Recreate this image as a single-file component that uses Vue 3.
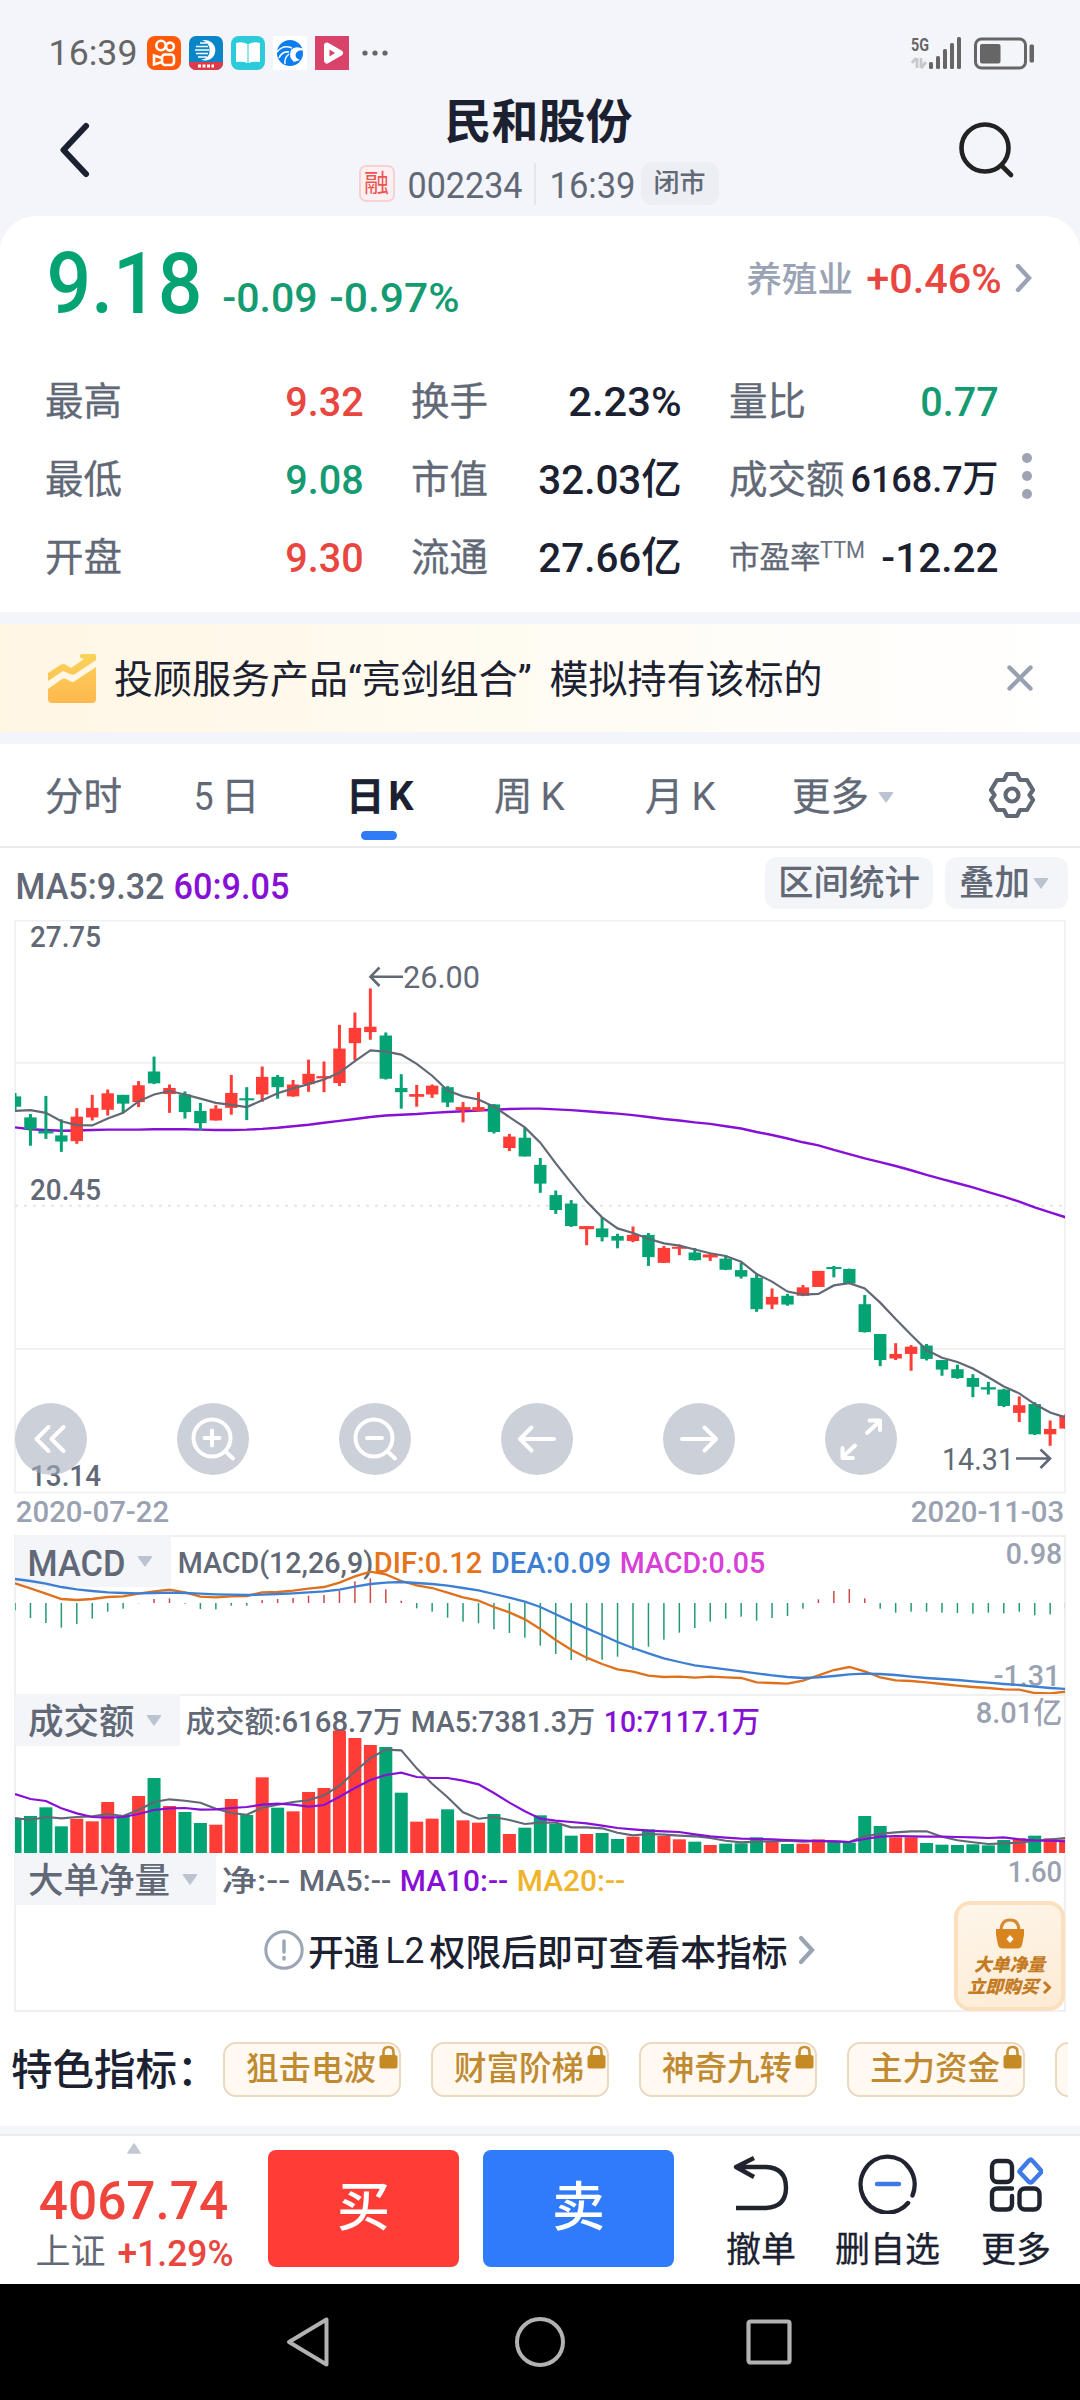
<script setup>
import { h } from 'vue'

// Condensed numeric label: the box is exactly the width and cap height of the text.
const Num = (p) => {
  const s = Number(p.s)
  const w = Number(p.w)
  const cap = s * 0.711
  return h('svg', { class: 'num', width: w, height: cap, style: { overflow: 'visible', display: 'block', flex: 'none' } }, [
    h('text', {
      x: -s * 0.04, y: cap, textLength: w + s * 0.08, lengthAdjust: 'spacingAndGlyphs',
      fill: p.c || '#1b2130', 'font-size': s, 'font-weight': p.b || 500,
      'font-family': 'Roboto, "Noto Sans CJK SC", sans-serif'
    }, p.t)
  ])
}
Num.props = ['t', 'w', 's', 'c', 'b']

const RED = '#ff3d36'
const GREEN = '#04a373'
const STEP = 15.45
const cx = (i) => +(i * STEP + 15).toFixed(2)

const py = (v) => +(v / 2.613 - 10).toFixed(2)
const my = (v) => +(v / 3 - 35).toFixed(2)
const vy = (v) => +(v / 3 - 194).toFixed(2)
const line = (arr, f) => arr.map((v, i) => cx(i) + ',' + f(v)).join(' ')

// high, body top, body bottom, low
const raw = [
  [478,487,514,528],[533,542,573,616],[486,577,584,598],[547,589,605,632],[518,540,604,611],[483,517,542,550],
  [469,479,522,537],[483,483,506,531],[447,458,502,515],[383,422,453,455],[456,465,481,530],[474,482,528,545],
  [504,525,557,575],[510,519,550,550],[431,478,517,535],[463,492,497,549],[409,436,482,501],[431,436,463,493],
  [444,456,487,488],[391,428,455,475],[396,434,440,476],[300,362,452,460],[268,308,348,392],[205,305,319,339],
  [320,328,441,443],[429,465,476,519],[457,481,488,514],[456,459,482,491],[460,463,503,515],[502,515,523,555],
  [476,515,525,526],[507,508,580,584],[585,592,622,630],[569,595,644,644],[648,666,715,739],[733,745,784,794],
  [758,767,826,828],[826,826,834,876],[803,832,855,866],[846,852,864,884],[827,849,865,868],[844,849,907,930],
  [878,883,922,922],[874,880,885,902],[883,895,915,916],[897,900,908,917],[902,911,940,941],[922,941,958,963],
  [951,961,1043,1050],[989,1011,1031,1043],[1003,1008,1031,1034],[980,986,1008,1009],[943,943,985,985],
  [930,933,937,960],[937,938,976,976],[1006,1030,1103,1104],[1108,1108,1176,1192],[1132,1160,1172,1176],
  [1137,1141,1160,1204],[1134,1138,1173,1177],[1176,1176,1201,1217],[1188,1200,1223,1225],[1213,1223,1246,1273],
  [1233,1247,1253,1266],[1251,1253,1296,1299],[1271,1294,1314,1338],[1286,1291,1370,1372],[1334,1356,1370,1400],
  [1318,1321,1355,1355]
]
const reds = new Set([4,5,6,8,10,13,14,16,18,19,20,21,22,23,26,27,29,30,32,37,40,42,43,45,49,51,52,57,58,65,67,68])
const color = (i) => (reds.has(i) ? RED : GREEN)

const ma5 = [525,523,530,552,562,563,545,530,500,482,473,482,493,504,509,515,497,479,466,455,443,425,395,367,370,378,402,433,472,487,495,514,541,568,608,662,713,762,803,832,844,859,871,877,887,897,904,919,951,971,997,1005,1003,981,975,989,1026,1069,1110,1150,1170,1181,1198,1221,1245,1263,1291,1313,1326]
const ma60 = [568,573,575,577,576,575,574,574,574,573,573,573,574,575,575,574,572,569,565,561,556,551,546,541,537,535,533,530,528,526,524,522,520,519,519,521,523,526,529,532,536,541,546,550,555,559,565,571,580,588,597,607,615,627,638,649,659,669,680,692,703,714,725,737,749,762,777,790,803]

const macd = [331,354,369,383,372,356,335,326,310,297,295,311,327,328,317,317,300,297,294,287,285,272,244,235,268,302,325,335,353,365,370,388,399,413,437,462,480,482,479,470,450,440,419,398,384,365,356,350,362,354,348,326,298,273,267,295,326,338,335,335,338,339,341,338,340,335,346,343,325]
const dif = [250,265,281,297,300,297,291,289,281,274,269,277,290,292,289,288,277,276,272,266,261,248,229,215,223,243,256,264,278,292,302,321,337,358,387,420,449,473,492,508,515,527,531,530,533,530,532,534,547,549,551,542,526,510,501,514,532,541,543,547,552,557,561,564,568,569,579,580,575]
const dea = [237,243,251,261,268,273,277,279,280,279,278,279,281,283,284,285,284,282,280,277,274,269,260,252,248,246,249,252,257,264,271,282,293,305,321,343,364,385,405,426,444,460,475,486,496,502,508,514,520,526,531,534,532,528,523,521,522,525,530,534,537,540,544,548,552,555,560,564,567]

const vol = [955,948,922,979,956,964,906,945,888,834,918,936,969,974,897,945,832,923,934,876,864,692,714,735,741,878,965,956,928,961,968,942,1002,983,946,972,1007,1002,999,1017,1010,988,1008,1018,1025,1035,1031,1030,1012,1025,1032,1031,1018,1024,1028,948,978,1012,1012,1029,1034,1035,1033,1036,1020,1015,1007,1015,1018]
const volRed = new Set([4,5,6,8,10,13,14,16,18,19,20,21,22,23,26,27,29,30,32,37,40,42,43,45,49,51,52,57,58,65,67,68])
const v5 = [954,960,951,955,951,949,942,948,930,906,898,902,908,926,939,944,923,914,906,901,886,857,815,774,749,751,805,851,892,937,956,951,960,972,968,968,982,982,985,998,1006,1002,1004,1007,1009,1014,1022,1027,1025,1024,1022,1025,1023,1024,1026,1009,1001,997,994,994,1010,1021,1027,1032,1030,1028,1023,1019,1014]
const v10 = [882,897,903,925,940,951,953,951,942,930,925,924,929,928,924,921,914,911,914,920,915,890,864,840,825,818,831,834,834,842,853,879,908,934,956,962,966,970,977,984,988,992,994,996,1003,1009,1013,1016,1017,1018,1020,1022,1023,1024,1026,1017,1010,1008,1009,1010,1010,1011,1012,1014,1012,1018,1021,1022,1024]

const stats = [
  [{ l: '最高', v: '9.32', w: 75, c: '#e8463f' }, { l: '换手', v: '2.23%', w: 110 }, { l: '量比', v: '0.77', w: 75, c: '#159b72' }],
  [{ l: '最低', v: '9.08', w: 75, c: '#159b72' }, { l: '市值', v: '32.03亿', w: 140 }, { l: '成交额', v: '6168.7万', w: 145, s: 37 }],
  [{ l: '开盘', v: '9.30', w: 75, c: '#e8463f' }, { l: '流通', v: '27.66亿', w: 140 }, { l: '市盈率', sup: 'TTM', v: '-12.22', w: 114 }]
]
const chips = ['狙击电波', '财富阶梯', '神奇九转', '主力资金', '']
const bars = [[929, 61], [936, 55], [943, 48], [950, 42], [957, 36]]
</script>

<template>
  <div class="page">
    <div class="status">
      <Num t="16:39" w="86" s="35.5" c="#666" b="400" />
      <div class="apps">
        <svg viewBox="0 0 34 34"><rect width="34" height="34" rx="8" fill="#ff5a0a"/><g fill="none" stroke="#fff" stroke-width="2.6"><circle cx="14" cy="9.5" r="4.7"/><circle cx="23" cy="10.5" r="3.9"/><rect x="15" y="18.5" width="12" height="10.5" rx="3"/><path d="M15 22 L7 19.5 V28.500 L15 26"/></g></svg>
        <svg viewBox="0 0 34 34"><rect width="34" height="34" rx="7" fill="#0a86c8"/><path d="M13 4.500A10.500 10.200 0 1 1 12 23.800A8.600 8.600 0 0 0 20.500 14A9 9 0 0 0 13 4.500Z" fill="#fff"/><path d="M11 7h7M7 10.500h12M6 14h14M7 17.500h12M9 21h9" stroke="#fff" stroke-width="1.500"/><path d="M0 26h34v1a7 7 0 0 1-7 7H7a7 7 0 0 1-7-7z" fill="#e03a48"/><path d="M9 30h16" stroke="#fff" stroke-width="3" stroke-dasharray="3 1.500"/></svg>
        <svg viewBox="0 0 34 34"><rect width="34" height="34" rx="8" fill="#2ccbdc"/><path d="M5 7q6-2 11.500 1v19q-5-2-11.500-1zM29 7q-6-2-11.500 1v19q5-2 11.500-1z" fill="#fff"/></svg>
        <svg viewBox="0 0 34 34"><rect width="34" height="34" fill="#fff"/><circle cx="17" cy="17" r="13" fill="#0b7df0"/><path d="M31 13q-9-4-13 1-3 7 3 12l6-2q-6-2-4-7 3-4 8-2z" fill="#fff"/><path d="M4 16q6-8 15-4M6 22q3-7 10-6M12 28q-1-6 4-10" stroke="#fff" stroke-width="1.500" fill="none"/></svg>
        <svg viewBox="0 0 34 34"><rect width="34" height="34" fill="#d9436a"/><path d="M12 9.500 L25 17 L12 24.500Z" fill="none" stroke="#fff" stroke-width="6" stroke-linejoin="round"/><path d="M14.500 13.500 L20 17 L14.500 20.500Z" fill="#d9436a"/></svg>
      </div>
      <svg class="more" width="28" height="6"><circle v-for="n in 3" :key="n" :cx="n * 10 - 7" cy="3" r="2.600" fill="#666"/></svg>
      <svg class="signal" viewBox="908 34 128 36" width="128" height="36">
        <text x="911" y="50" font-size="18" font-weight="700" textLength="18" lengthAdjust="spacingAndGlyphs" fill="#666" font-family="Roboto, sans-serif">5G</text>
        <path d="M917 57v10M916 57l-4 5M921 57v10M921 67l5-6" stroke="#c6c8cc" stroke-width="2.800" fill="none"/>
        <rect v-for="b in bars" :key="b[0]" :x="b[0]" :y="b[1]" width="4" :height="68 - b[1]" rx="1.500" fill="#666"/>
        <rect x="975.500" y="38" width="50" height="29" rx="6" fill="none" stroke="#666" stroke-width="3"/>
        <rect x="980" y="43" width="20.500" height="19.500" rx="2" fill="#666"/>
        <rect x="1029.500" y="43.500" width="4.500" height="18" rx="1.500" fill="#666"/>
      </svg>
    </div>

    <div class="header">
      <svg class="back" width="34" height="60" viewBox="0 0 34 60"><path d="M28 6 L5.500 30 L28 54" fill="none" stroke="#1b2130" stroke-width="6" stroke-linecap="round" stroke-linejoin="round"/></svg>
      <div class="title">
        <div class="name">民和股份</div>
        <div class="sub">
          <span class="rong">融</span>
          <Num class="code" t="002234" w="112" s="36.5" c="#616876" b="400" />
          <i class="vline"></i>
          <Num t="16:39" w="83" s="36.5" c="#616876" b="400" />
          <span class="closed">闭市</span>
        </div>
      </div>
      <svg class="search" width="58" height="60" viewBox="0 0 58 60"><circle cx="26" cy="28" r="23.500" fill="none" stroke="#222" stroke-width="4.600"/><path d="M43 46 L52 55" stroke="#222" stroke-width="4.600" stroke-linecap="round"/></svg>
    </div>

    <div class="card">
      <div class="quote">
        <Num t="9.18" w="149" s="86" c="#04a373" b="500" />
        <Num class="chg" t="-0.09" w="92" s="41.5" c="#159b72" />
        <Num class="pct" t="-0.97%" w="127" s="41.5" c="#159b72" />
        <div class="sector">
          <span>养殖业</span>
          <Num t="+0.46%" w="132" s="41.5" c="#e8463f" />
          <svg width="18" height="30" viewBox="0 0 18 30"><path d="M3 3 L14 15 L3 27" fill="none" stroke="#9aa3b4" stroke-width="4.400" stroke-linecap="round"/></svg>
        </div>
      </div>
      <div class="stats">
        <div v-for="(r, i) in stats" :key="i" class="srow">
          <div v-for="s in r" :key="s.l" class="cell">
            <span class="lab" :class="{ small: s.sup }">{{ s.l }}<Num v-if="s.sup" class="ttm" :t="s.sup" w="43" s="24.5" c="#6d7380" b="400" /></span>
            <Num :t="s.v" :w="s.w" :s="s.s || 41.5" :c="s.c" />
          </div>
        </div>
        <svg class="kebab" width="10" height="48"><circle v-for="n in 3" :key="n" cx="5" :cy="n * 18 - 12" r="5" fill="#9da5b5"/></svg>
      </div>
    </div>

    <div class="banner">
      <svg width="48" height="49" viewBox="0 0 48 49">
        <defs><linearGradient id="gold" gradientUnits="userSpaceOnUse" x1="0" y1="0" x2="0" y2="49"><stop offset="0" stop-color="#f8d358"/><stop offset="1" stop-color="#ffb84f"/></linearGradient></defs>
        <path d="M0 19 L13 10.500 Q16 9.500 18 11 L23 14 L36 5 L32 3.500 Q31 .5 34 0 H46 Q48 0 48 2 V6 L27 20 Q25 21.500 22 20 L15 17 L0 27Z" fill="url(#gold)"/>
        <path d="M0 35 L14 25 Q16 24 18 25 L23 27.500 Q25 28.500 27 27 L48 13 V45 Q48 49 44 49 H4 Q0 49 0 45Z" fill="url(#gold)"/>
      </svg>
      <span class="btext">投顾服务产品“亮剑组合” 模拟持有该标的</span>
      <svg class="x" width="26" height="26"><path d="M2.500 2.500 L23.500 23.500 M23.500 2.500 L2.500 23.500" stroke="#98a1b2" stroke-width="4.400" stroke-linecap="round"/></svg>
    </div>

    <div class="tabs">
      <span class="t1">分时</span>
      <span class="t2"><Num t="5" w="17" s="39" c="#616876" b="400" />日</span>
      <span class="t3">日<Num t="K" w="22" s="41" b="700" /></span>
      <span class="t4">周<Num t="K" w="21" s="39" c="#616876" b="400" /></span>
      <span class="t5">月<Num t="K" w="21" s="39" c="#616876" b="400" /></span>
      <span class="t6">更多<i class="tri"></i></span>
      <svg class="gear" width="50" height="50" viewBox="0 0 50 50" fill="none" stroke="#616876" stroke-width="4.200" stroke-linejoin="round"><path d="M20 4 H30 L33 10 L40 10 L46 20 L42.500 25 L46 30 L40 40 L33 40 L30 46 H20 L17 40 L10 40 L4 30 L7.500 25 L4 20 L10 10 L17 10Z"/><circle cx="25" cy="25" r="6.500"/></svg>
    </div>

    <div class="maRow">
      <Num class="ma" t="MA5:9.32" w="146" s="36.5" c="#616876" b="500" />
      <Num class="ma" t="60:9.05" w="113" s="36.5" c="#8610d6" b="500" />
      <span class="pill p1">区间统计</span>
      <span class="pill p2">叠加<i class="tri"></i></span>
    </div>

    <svg class="chart" width="1080" height="574" viewBox="0 0 1080 574">
      <defs><clipPath id="plot"><rect x="15" y="0" width="1050" height="573"/></clipPath></defs>
      <rect x="15" y=".5" width="1050" height="572" fill="none" stroke="#f0f1f3" stroke-width="2"/>
      <path d="M15 142.700H1065M15 429H1065" stroke="#f1f1f3" stroke-width="2"/>
      <path d="M15 285.800H1065" stroke="#e5e5e8" stroke-width="2" stroke-dasharray="3 6"/>
      <g font-family="Roboto, sans-serif" font-weight="500" font-size="29.500" fill="#616876">
        <text x="30" y="27" textLength="71" lengthAdjust="spacingAndGlyphs">27.75</text>
        <text x="30" y="280" textLength="71" lengthAdjust="spacingAndGlyphs">20.45</text>
        <text x="30" y="566" textLength="71" lengthAdjust="spacingAndGlyphs">13.14</text>
      </g>
      <g clip-path="url(#plot)">
        <polyline :points="line(ma60, py)" fill="none" stroke="#8610d6" stroke-width="2.400"/>
        <g v-for="(k, i) in raw" :key="i" :fill="color(i)">
          <rect :x="cx(i) - 1.500" :y="py(k[0])" width="3" :height="py(k[3]) - py(k[0])"/>
          <rect :x="cx(i) - (k[2] - k[1] < 9 ? 7.500 : 6.200)" :y="py(k[1])" :width="k[2] - k[1] < 9 ? 15 : 12.400" :height="Math.max(2, py(k[2]) - py(k[1]))"/>
        </g>
        <polyline :points="line(ma5, py)" fill="none" stroke="#616876" stroke-width="2.200"/>
      </g>
      <g font-family="Roboto, sans-serif" font-size="31.500" fill="#616876">
        <text x="403" y="68" textLength="77" lengthAdjust="spacingAndGlyphs">26.00</text>
        <text x="942" y="549.500" textLength="72" lengthAdjust="spacingAndGlyphs">14.31</text>
      </g>
      <path d="M403 56.700H371M379.500 47.500L370.500 56.700L379.500 66M1016 538.500H1049M1040.500 529.500L1050 538.500L1040.500 548" fill="none" stroke="#616876" stroke-width="2.600"/>
      <g fill="#a9b0bf" fill-opacity=".6"><circle v-for="n in 6" :key="n" :cx="n * 162 - 111" cy="519" r="36"/></g>
      <g fill="none" stroke="#fff" stroke-width="4" stroke-linecap="round" stroke-linejoin="round">
        <path d="M48.500 507L36.500 519L48.500 531M63.500 507L51.500 519L63.500 531"/>
        <circle cx="212" cy="518" r="18.500"/><path d="M204.500 518H219.500M212 510.500V525.500M226 532L233 538.500"/>
        <circle cx="374" cy="518" r="18.500"/><path d="M367 518H382M388 532L395 538.500"/>
        <path d="M554 519H520M531.500 507.500L520 519L531.500 530.500"/>
        <path d="M682 519H716M704.500 507.500L716 519L704.500 530.500"/>
        <path d="M867 513L880 501M869.500 500.500H880V510M855 525.500L842.500 537M842.500 528V538H853"/>
      </g>
    </svg>

    <div class="dates">
      <Num t="2020-07-22" w="151" s="29.5" c="#9aa2b2" />
      <Num t="2020-11-03" w="151" s="29.5" c="#9aa2b2" />
    </div>

    <div class="panel p-macd">
      <div class="phead">
        <div class="ptab"><Num t="MACD" w="95" s="37" c="#616876" /><i class="tri"></i></div>
        <div class="legend">
          <Num t="MACD(12,26,9)" w="193" s="29.5" c="#616876" />
          <Num class="tight" t="DIF:0.12" w="106" s="29.5" c="#e5731a" />
          <Num t="DEA:0.09" w="118" s="29.5" c="#3c7fd3" />
          <Num t="MACD:0.05" w="143" s="29.5" c="#d840d8" />
        </div>
      </div>
      <Num class="hi" t="0.98" w="54" s="29.5" c="#9aa2b2" />
      <Num class="lo" t="-1.31" w="64" s="29.5" c="#9aa2b2" />
      <svg class="layer" width="1080" height="160">
        <defs><clipPath id="osc"><rect x="15" y="0" width="1050" height="160"/></clipPath></defs>
        <g clip-path="url(#osc)">
          <rect v-for="(v, i) in macd" :key="i" :x="cx(i) - .75" :y="Math.min(my(v), 68)" width="1.500" :height="Math.abs(my(v) - 68)" :fill="v < 309 ? '#cc4a48' : '#249a78'"/>
          <polyline :points="line(dif, my)" fill="none" stroke="#df701c" stroke-width="2.300"/>
          <polyline :points="line(dea, my)" fill="none" stroke="#3c7fd3" stroke-width="2.300"/>
        </g>
      </svg>
    </div>

    <div class="panel p-vol">
      <div class="phead">
        <div class="ptab cj">成交额<i class="tri"></i></div>
        <div class="legend">
          <Num t="成交额:6168.7万" w="214" s="29.5" c="#616876" />
          <Num t="MA5:7381.3万" w="182" s="29.5" c="#616876" />
          <Num t="10:7117.1万" w="154" s="29.5" c="#8610d6" />
        </div>
      </div>
      <Num class="hi" t="8.01亿" w="84" s="29.5" c="#9aa2b2" />
      <svg class="layer" width="1080" height="160">
        <defs><clipPath id="volume"><rect x="15" y="0" width="1050" height="160"/></clipPath></defs>
        <g clip-path="url(#volume)">
          <rect v-for="(v, i) in vol" :key="i" :x="cx(i) - 6.500" :y="vy(v)" width="13" :height="159 - vy(v)" :fill="volRed.has(i) ? RED : GREEN"/>
          <polyline :points="line(v5, vy)" fill="none" stroke="#616876" stroke-width="2.100"/>
          <polyline :points="line(v10, vy)" fill="none" stroke="#8610d6" stroke-width="2.200"/>
        </g>
      </svg>
    </div>

    <div class="panel p-net">
      <div class="phead">
        <div class="ptab cj">大单净量<i class="tri"></i></div>
        <div class="legend">
          <Num t="净:--" w="66" s="29.5" c="#616876" />
          <Num t="MA5:--" w="90" s="29.5" c="#616876" />
          <Num t="MA10:--" w="106" s="29.5" c="#8610d6" />
          <Num t="MA20:--" w="106" s="29.5" c="#efb42b" />
        </div>
      </div>
      <Num class="hi" t="1.60" w="52" s="29.5" c="#9aa2b2" />
      <div class="l2">
        <svg width="40" height="42"><circle cx="20" cy="21" r="18.200" fill="none" stroke="#9aa5b5" stroke-width="3"/><path d="M20 12V23M20 28.500V30" stroke="#9aa5b5" stroke-width="3.400" stroke-linecap="round"/></svg>
        <span class="ltxt"><span>开通</span><Num t="L2" w="36" s="37" b="400" /><span>权限后即可查看本指标</span></span>
        <svg width="18" height="30" viewBox="0 0 18 30"><path d="M3 3 L14 15 L3 27" fill="none" stroke="#9aa3b4" stroke-width="4.200" stroke-linecap="round"/></svg>
      </div>
      <div class="buy-tip">
        <svg width="30" height="32" viewBox="0 0 30 32"><path d="M6 13 Q6 2 15 2 Q24 2 24 13" fill="none" stroke="#d58a33" stroke-width="3"/><path d="M1 11H29V17L27 27Q26 30.500 22 30.500H8Q4 30.500 3 27L1 17Z" fill="#d9851f"/><path d="M15 17L18.500 21L15 25L11.500 21Z" fill="#fff"/></svg>
        <span>大单净量</span>
        <span class="go">立即购买<svg width="10" height="15"><path d="M2 2L7.500 7.500L2 13" fill="none" stroke="#c47a22" stroke-width="3"/></svg></span>
      </div>
    </div>

    <div class="feature">
      <span class="flabel">特色指标：</span>
      <div class="chips">
        <div v-for="c in chips" :key="c" class="chip">
          <span>{{ c }}</span>
          <svg class="lock" width="19" height="24" viewBox="0 0 19 24"><path d="M4.500 10V7Q4.500 2 9.500 2Q14.500 2 14.500 7V10" fill="none" stroke="#c5902f" stroke-width="2.600"/><rect x=".5" y="10" width="18" height="13.500" rx="2.500" fill="#c68a24"/></svg>
        </div>
      </div>
    </div>

    <div class="bottom">
      <div class="index">
        <svg class="up" width="14" height="11"><path d="M7 1L13 10H1Z" fill="#c3c8d3" stroke="#c3c8d3" stroke-linejoin="round" stroke-width="1.500"/></svg>
        <Num t="4067.74" w="185" s="54.5" c="#f0453c" b="500" />
        <div class="sz"><span>上证</span><Num t="+1.29%" w="113" s="36.5" c="#e8463f" b="500" /></div>
      </div>
      <div class="btn red">买</div>
      <div class="btn blue">卖</div>
      <div class="act a1">
        <svg width="56" height="60" viewBox="0 0 56 60" fill="none" stroke="#20242f" stroke-width="4.400"><path d="M3 54H33Q53 53 53 33.500Q53 14 33 13H3M21 4L3 13L21 23" stroke-linejoin="round"/></svg>
        <span>撤单</span>
      </div>
      <div class="act a2">
        <svg width="60" height="60" viewBox="0 0 60 60" fill="none" stroke="#20242f" stroke-width="4.400" stroke-linecap="round"><path d="M54.500 41.500A27 28 0 1 0 50 49"/><path d="M19 30H41" stroke="#3f7be6"/></svg>
        <span>删自选</span>
      </div>
      <div class="act a3">
        <svg width="54" height="60" viewBox="0 0 54 60" fill="none" stroke="#20242f" stroke-width="4.400" stroke-linecap="round" stroke-linejoin="round"><rect x="3" y="7" width="20" height="21" rx="5.500"/><path d="M42 5.500Q43 6 52 16.500Q52.500 17.500 52 18.500L43 28Q41.500 29 40 28L31 18.500Q30 17.500 31 16.500L40 6.500Q41 5.500 42 5.500Z" stroke="#3f7be6"/><path d="M23 34.500H8.500Q3 34.500 3 40V50Q3 55.500 8.500 55.500H17.500Q23 55.500 23 50V42"/><rect x="30.500" y="34.500" width="20" height="21" rx="5.500"/></svg>
        <span>更多</span>
      </div>
    </div>

    <div class="nav">
      <svg width="46" height="54" viewBox="0 0 46 54"><path d="M41.500 4.500V49.500L4 27Z" fill="none" stroke="#b2b2b2" stroke-width="4" stroke-linejoin="round"/></svg>
      <svg class="home" width="52" height="52"><circle cx="26" cy="26" r="23" fill="none" stroke="#b2b2b2" stroke-width="4"/></svg>
      <svg width="48" height="48"><rect x="3.500" y="3.500" width="41" height="41" rx="2" fill="none" stroke="#b2b2b2" stroke-width="4.200"/></svg>
    </div>
  </div>
</template>

<style>
body { margin: 0; background: #f4f5fa; }
</style>

<style scoped>
.page { width: 1080px; height: 2400px; overflow: hidden; background: #f4f5fa; font-family: Roboto, "Noto Sans CJK SC", sans-serif; color: #1b2130; display: flex; flex-direction: column; }
.page > * { flex: none; box-sizing: border-box; }
span { white-space: nowrap; }
svg { flex: none; display: block; }
.status { height: 105px; padding-left: 50px; display: flex; align-items: center; }
.apps { display: flex; gap: 8px; margin-left: 11px; }
.apps svg { width: 34px; height: 34px; }
.more { margin-left: 13px; }
.signal { margin-left: auto; margin-right: 44px; }

.header { height: 111px; padding: 0 61px 0 58px; display: grid; grid-template-columns: 100px 1fr 100px; }
.back { margin-top: 15px; }
.search { margin-top: 15px; justify-self: end; margin-right: 2px; }
.title { display: flex; flex-direction: column; align-items: center; }
.name { font-size: 47px; font-weight: 700; line-height: 32px; height: 57px; padding-top: 1px; box-sizing: border-box; }
.sub { display: flex; align-items: center; height: 43px; }
.rong { width: 36px; height: 37px; line-height: 34px; box-sizing: border-box; border: 2px solid #f5d3d4; border-radius: 7px; background: #fcf0f2; color: #ee5450; font-size: 25px; text-align: center; margin-right: 14px; }
.code, .vline + .num { margin-top: 2px; }
.vline { width: 2px; height: 42px; background: #e4e6eb; margin: 0 15px 0 13px; }
.closed { margin-left: 7px; width: 78px; height: 43px; line-height: 43px; border-radius: 12px; background: #eceef3; text-align: center; color: #616876; font-size: 26px; font-weight: 500; }

.card { height: 396px; background: #fff; border-radius: 36px 36px 0 0; }
.quote { height: 97px; display: flex; align-items: flex-end; padding-left: 50px; }
.chg { margin: 0 0 1.500px 25px; }
.pct { margin: 0 0 1.500px 15px; }
.sector { margin-left: auto; margin-right: 47px; height: 70px; display: flex; align-items: center; }
.sector span { font-size: 35.500px; color: #9aa3b4; font-weight: 500; margin-right: 15px; margin-top: -3px; }
.sector svg:last-child { margin-left: 15px; }
.stats { position: relative; padding: 49px 83px 0 46px; }
.srow { height: 78px; display: grid; grid-template-columns: 316px 268px 267px; column-gap: 50px; }
.cell { display: flex; align-items: center; justify-content: space-between; }
.lab { font-size: 38.500px; color: #616876; display: flex; line-height: 60px; margin: 2px 0 0 -1px; -webkit-text-stroke: .3px currentColor; }
.lab.small { font-size: 30.500px; margin-top: 1px; }
.ttm { margin-top: 13px; }
.kebab { position: absolute; left: 1022px; top: 139px; }

.banner { margin-top: 12px; height: 108px; background: linear-gradient(90deg, #fff6e4, #fffbf0 40%, #fffdf9 75%, #fff); display: flex; align-items: center; padding: 0 47px 0 48px; }
.btext { margin: -4px 0 0 18px; font-size: 39px; word-spacing: 8px; }
.x { margin-left: auto; }

.tabs { margin-top: 12px; height: 104px; background: #fff; border-bottom: 2px solid #e9eaed; display: flex; align-items: center; color: #616876; font-size: 38.500px; position: relative; }
.tabs span { display: flex; align-items: center; gap: 9px; line-height: 60px; margin-top: 4px; -webkit-text-stroke: .3px currentColor; }
.tabs .num { margin-top: -2px; }
.tabs .t1 { margin-left: 45px; width: 150px; }
.tabs .t2 { width: 151px; }
.tabs .t3 { width: 148px; color: #1b2130; font-weight: 700; position: relative; gap: 5px; }
.t3::after { content: ""; position: absolute; left: 15px; top: 64px; width: 36px; height: 9px; border-radius: 5px; background: #2f7cf6; }
.t4 { width: 151px; }
.t5 { width: 147px; }
.t6 { width: 195px; }
.tri { display: inline-block; width: 0; height: 0; border-left: 8px solid transparent; border-right: 8px solid transparent; border-top: 11px solid #bcc3d0; border-radius: 2px; }

.maRow { height: 72px; background: #fff; display: flex; align-items: center; padding-left: 17px; gap: 12px; padding-bottom: 2px; }
.ma { margin-top: 5px; }
.pill { background: #f4f5f9; border-radius: 12px; height: 52px; line-height: 52px; font-size: 35.500px; color: #616876; font-weight: 500; text-align: center; }
.p1 { margin-left: auto; width: 168px; }
.p2 { width: 123px; margin-right: 12px; display: flex; align-items: center; justify-content: center; gap: 3px; padding-right: 5px; box-sizing: border-box; }
.chart { background: #fff; }
.dates { height: 41px; background: #fff; display: flex; justify-content: space-between; padding: 7px 17px 0; }

.panel { position: relative; background: #fff; }
.panel::before { content: ""; position: absolute; left: 14px; right: 14px; top: 0; bottom: 0; border: 2px solid #eff0f2; border-bottom: 0; }
.p-macd, .p-vol { height: 159px; }
.p-net { height: 159px; }
.p-net::before { border-bottom: 2px solid #eff0f2; border-top: 0; }
.phead { position: relative; height: 52px; padding-left: 15px; display: flex; }
.ptab { background: #f4f5f9; height: 52px; width: 156px; box-sizing: border-box; padding: 4px 18px 0 14px; display: flex; align-items: center; justify-content: space-between; }
.ptab .tri { margin-bottom: 3px; }
.cj { font-size: 35.500px; color: #616876; font-weight: 500; width: 165px; line-height: 50px; padding-left: 13px; }
.p-net .cj { width: 201px; }
.legend { display: flex; align-items: center; gap: 11px; padding: 3px 0 0 8px; }
.p-vol .legend, .p-net .legend { padding-left: 7px; }
.tight { margin-left: -8px; }
.hi { position: absolute; right: 19px; top: 8px; }
.lo { position: absolute; right: 21px; top: 130px; }
.layer { position: absolute; left: 0; top: 0; overflow: hidden; }
.l2 { position: relative; display: flex; align-items: center; padding-left: 264px; height: 90px; }
.ltxt { display: flex; align-items: center; font-size: 35.800px; font-weight: 500; margin: 0 10px 0 4px; gap: 7px; }
.buy-tip { position: absolute; left: 954px; top: 48px; width: 111px; height: 110px; box-sizing: border-box; border: 4px solid #fce0bd; border-radius: 16px; background: linear-gradient(160deg, #fdf6ea, #feebd4); display: flex; flex-direction: column; align-items: center; padding-top: 13px; color: #c47a22; font-size: 17.800px; font-weight: 900; font-style: italic; }
.buy-tip span { line-height: 22px; }
.buy-tip svg + span { margin-top: 4px; }
.go { display: flex; align-items: center; gap: 3px; }

.feature { height: 114px; background: #fff; display: flex; align-items: center; padding-right: 12px; }
.flabel { font-size: 41.500px; font-weight: 500; margin: -4px 0 0 11px; width: 212px; flex: none; }
.chips { display: flex; gap: 30px; overflow: hidden; flex: 1; }
.chip { flex: none; position: relative; width: 178px; height: 55px; box-sizing: border-box; border: 2px solid #ead9c0; border-radius: 13px; background: #fff9f1; color: #c08a30; font-size: 32.500px; font-weight: 500; line-height: 51px; padding-left: 21px; }
.lock { position: absolute; right: 1px; top: 1px; }

.bottom { margin-top: 8px; border-top: 2px solid #eaebee; height: 150px; background: #fff; display: flex; }
.index { width: 267px; display: flex; flex-direction: column; align-items: center; margin-right: 1px; }
.up { margin: 7px 0 26px; }
.sz { display: flex; align-items: center; gap: 13px; margin-top: 12px; font-size: 35px; color: #616876; line-height: 44px; }
.btn { width: 191px; height: 117px; margin: 14px 24px 0 0; border-radius: 8px; color: #fff; font-size: 53px; font-weight: 500; line-height: 116px; text-align: center; }
.red { background: #ff3d36; }
.blue { background: #2f7bfa; margin-right: 0; }
.act { display: flex; flex-direction: column; align-items: center; font-size: 35px; padding-top: 18px; }
.act span { line-height: 48px; margin-top: 13px; -webkit-text-stroke: .3px currentColor; }
.a1 { margin-left: 52px; }
.a2 { margin-left: 39px; }
.a3 { margin-left: 41px; }
.nav { height: 116px; background: #000; display: flex; align-items: center; padding: 0 287px 0 285px; justify-content: space-between; }
.home { position: relative; left: 2px; }
</style>
